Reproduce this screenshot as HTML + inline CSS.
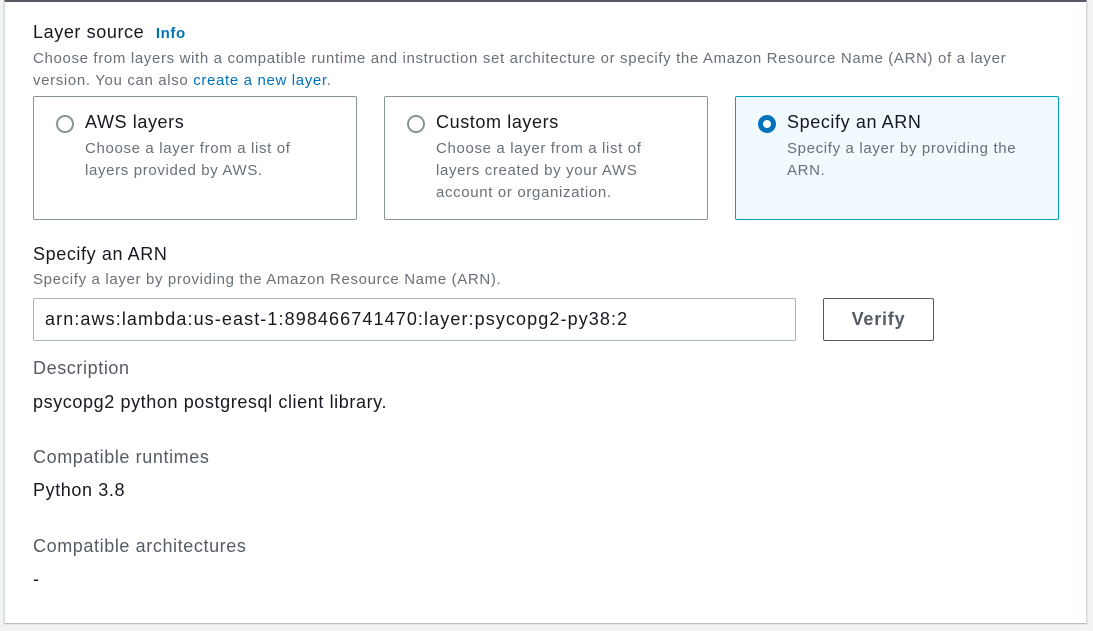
<!DOCTYPE html>
<html><head><meta charset="utf-8"><style>
body{margin:0;width:1093px;height:631px;background:#f2f3f3;font-family:"Liberation Sans",sans-serif;position:relative;overflow:hidden}
.panel{position:absolute;left:4px;top:0;width:1081px;height:621px;background:#fff;border-left:1px solid #d5dbdb;border-right:1px solid #d5dbdb;border-top:2px solid #545b64;box-shadow:0 1px 1px rgba(0,22,37,.3)}
.a{position:absolute;white-space:nowrap}
.h{font-size:18px;color:#16191f;letter-spacing:0.6px}
.s{font-size:15px;color:#687078;letter-spacing:0.65px}
.link{color:#0073bb}
.card{position:absolute;top:96px;width:322px;height:122px;border:1px solid #879596;border-radius:2px;background:#fff}
.card.sel{border-color:#00a1c9;background:#f1faff}
.radio{position:absolute;left:22px;top:18px;border:2px solid #879596;border-radius:50%;box-sizing:border-box;width:18px;height:18px}
.sel .radio{border:5px solid #0073bb;background:#fff}
.ct{position:absolute;left:51px;top:15px;font-size:18px;color:#16191f;white-space:nowrap;letter-spacing:0.6px}
.cd{position:absolute;left:51px;top:41px;font-size:15px;color:#687078;line-height:22px;letter-spacing:0.65px;white-space:nowrap}
</style></head><body>
<div class="panel"></div>
<div class="a h" style="left:33px;top:22px">Layer source <b class="link" style="font-size:15px;margin-left:6px;letter-spacing:0.6px">Info</b></div>
<div class="a s" style="left:33px;top:48px;line-height:22px">Choose from layers with a compatible runtime and instruction set architecture or specify the Amazon Resource Name (ARN) of a layer<br>version. You can also <span class="link">create a new layer</span>.</div>
<div class="card" style="left:33px"><div class="radio"></div><div class="ct">AWS layers</div><div class="cd">Choose a layer from a list of<br>layers provided by AWS.</div></div>
<div class="card" style="left:384px"><div class="radio"></div><div class="ct">Custom layers</div><div class="cd">Choose a layer from a list of<br>layers created by your AWS<br>account or organization.</div></div>
<div class="card sel" style="left:735px"><div class="radio"></div><div class="ct">Specify an ARN</div><div class="cd">Specify a layer by providing the<br>ARN.</div></div>
<div class="a h" style="left:33px;top:244px">Specify an ARN</div>
<div class="a s" style="left:33px;top:271px">Specify a layer by providing the Amazon Resource Name (ARN).</div>
<div class="a" style="left:33px;top:298px;width:761px;height:41px;border:1px solid #aab7b8;border-radius:2px"></div>
<div class="a h" style="left:45px;top:309px;letter-spacing:1.1px">arn:aws:lambda:us-east-1:898466741470:layer:psycopg2-py38:2</div>
<div class="a" style="left:823px;top:298px;width:109px;height:41px;border:1px solid #545b64;border-radius:2px;font-weight:bold;font-size:18px;letter-spacing:0.8px;color:#545b64;text-align:center;line-height:41px">Verify</div>
<div class="a h" style="left:33px;top:358px;color:#545b64">Description</div>
<div class="a h" style="left:33px;top:392px">psycopg2 python postgresql client library.</div>
<div class="a h" style="left:33px;top:447px;color:#545b64">Compatible runtimes</div>
<div class="a h" style="left:33px;top:480px">Python 3.8</div>
<div class="a h" style="left:33px;top:536px;color:#545b64">Compatible architectures</div>
<div class="a h" style="left:33px;top:569px">-</div>
</body></html>
